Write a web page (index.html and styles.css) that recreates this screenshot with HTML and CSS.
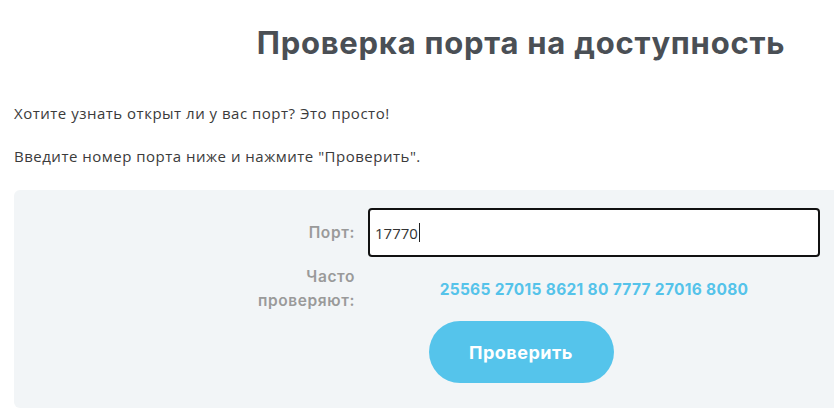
FILE: index.html
```html
<!DOCTYPE html>
<html lang="ru">
<head>
<meta charset="utf-8">
<link rel="stylesheet" href="styles.css">
<title>Проверка порта</title>
</head>
<body>
<div class="page">
  <h1 class="title">Проверка порта на доступность</h1>
  <p class="lead">Хотите узнать открыт ли у вас порт? Это просто!</p>
  <p class="lead">Введите номер порта ниже и нажмите "Проверить".</p>
  <form class="panel">
    <div class="grid">
      <div class="label">Порт:</div>
      <div class="input">17770<span class="caret"></span></div>
      <div class="label">Часто<br>проверяют:</div>
      <div class="popular">
        <a href="#">25565</a> <a href="#">27015</a> <a href="#">8621</a> <a href="#">80</a> <a href="#">7777</a> <a href="#">27016</a> <a href="#">8080</a>
      </div>
    </div>
    <div class="actions">
      <button type="button" class="btn">Проверить</button>
    </div>
  </form>
</div>
</body>
</html>
```
FILE: styles.css
```css
html, body {
  margin: 0;
  padding: 0;
  background: #fff;
  overflow: hidden;
}
.page {
  width: 1014px;
  margin-left: 14px;
  font-family: "Inter", "Open Sans", sans-serif;
}
.title {
  margin: 0;
  padding-top: 25px;
  height: 40px;
  line-height: 36px;
  text-align: center;
  font-size: 31px;
  font-weight: 700;
  color: #4a4f55;
  letter-spacing: 0.75px;
}
.lead {
  margin: 0;
  font-family: "Open Sans", sans-serif;
  font-size: 15px;
  color: #3b3b3b;
  line-height: 20px;
  letter-spacing: 0.5px;
}
.lead:first-of-type {
  margin-top: 38px;
}
.lead + .lead {
  margin-top: 23px;
}
.panel {
  margin-top: 24px;
  background: #f2f5f7;
  border-radius: 6px;
  padding: 18px 0 25px;
}
.grid {
  display: grid;
  grid-template-columns: 341px 452px;
  column-gap: 13px;
  row-gap: 8px;
  align-items: center;
}
.label {
  text-align: right;
  font-size: 15.5px;
  font-weight: 600;
  color: #9a9a9a;
  line-height: 24px;
  letter-spacing: 0.6px;
}
.input {
  box-sizing: border-box;
  width: 452px;
  height: 49px;
  border: 2px solid #111;
  border-radius: 4px;
  padding: 0 5px;
  font-family: "Open Sans", sans-serif;
  font-size: 15px;
  color: #333;
  background: #fff;
  display: flex;
  align-items: center;
}
.caret {
  display: inline-block;
  width: 1px;
  height: 19px;
  margin-left: 1px;
  background: #222;
}
.popular {
  text-align: center;
  font-size: 15.5px;
  font-weight: 700;
  letter-spacing: 0.3px;
}
.popular a {
  color: #55c3ea;
  text-decoration: none;
}
.actions {
  margin-top: 8px;
  display: flex;
  justify-content: center;
}
.btn {
  width: 185px;
  height: 62px;
  border: none;
  border-radius: 31px;
  background: #55c4eb;
  color: #fff;
  font-family: "Inter", sans-serif;
  font-size: 18px;
  font-weight: 700;
  letter-spacing: 0.5px;
  cursor: pointer;
}
```
